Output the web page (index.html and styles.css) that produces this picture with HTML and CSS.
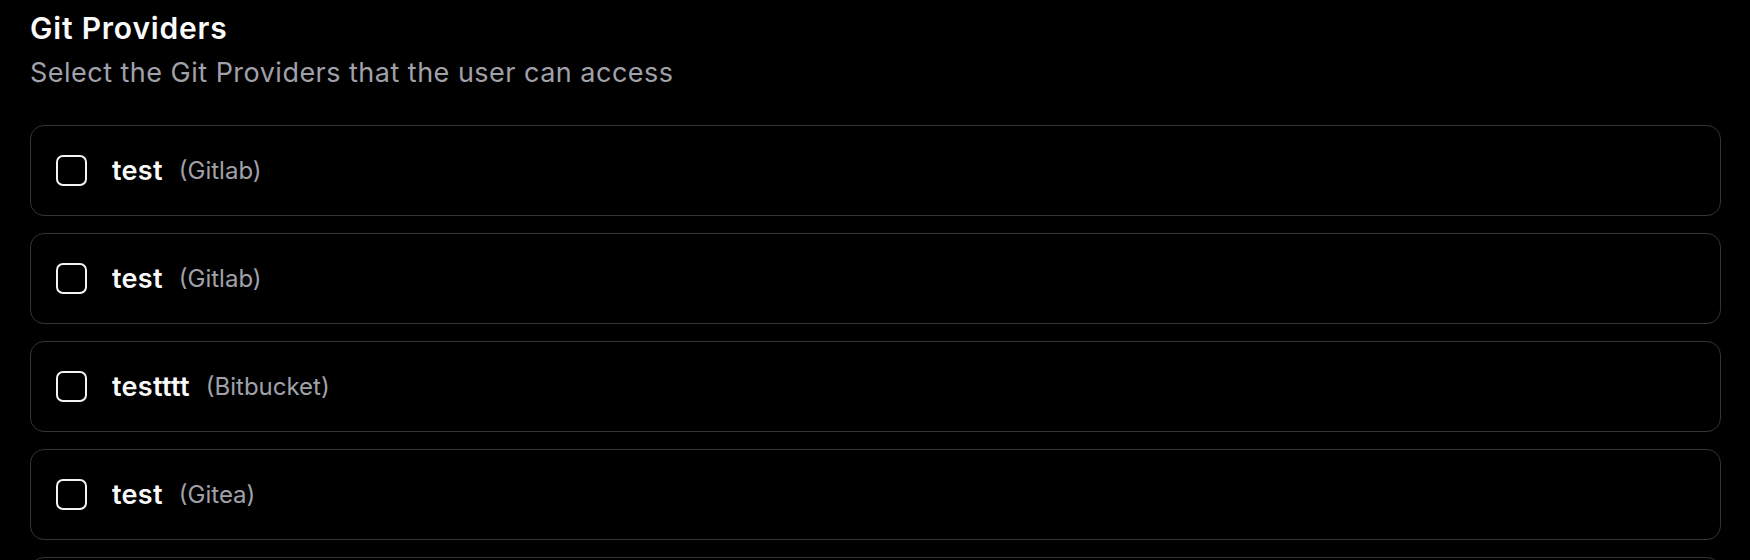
FILE: index.html
```html
<!DOCTYPE html>
<html lang="en">
<head>
<meta charset="utf-8">
<title>Git Providers</title>
<link rel="stylesheet" href="styles.css">
</head>
<body>
<main class="page">
  <h2 class="title">Git Providers</h2>
  <p class="subtitle">Select the Git Providers that the user can access</p>
  <div class="list">
    <label class="item"><span class="checkbox"></span><span class="name">test</span><span class="provider">(Gitlab)</span></label>
    <label class="item"><span class="checkbox"></span><span class="name">test</span><span class="provider">(Gitlab)</span></label>
    <label class="item"><span class="checkbox"></span><span class="name">testttt</span><span class="provider">(Bitbucket)</span></label>
    <label class="item"><span class="checkbox"></span><span class="name">test</span><span class="provider">(Gitea)</span></label>
    <label class="item"><span class="checkbox"></span><span class="name">test</span><span class="provider">(Github)</span></label>
  </div>
</main>
</body>
</html>
```
FILE: styles.css
```css
html, body {
  margin: 0;
  background: #000;
  height: 100%;
  overflow: hidden;
}
body {
  font-family: Inter, "Noto Sans", "Liberation Sans", sans-serif;
  color: #fafafa;
}
.page {
  padding: 0 29px 0 30px;
}
.title {
  margin: 0;
  padding-top: 10px;
  font-size: 30px;
  line-height: 36px;
  font-weight: 600;
  letter-spacing: 0.8px;
  color: #fafafa;
}
.subtitle {
  margin: 11px 0 0;
  font-size: 27px;
  line-height: 32px;
  letter-spacing: 0.48px;
  color: #a1a1aa;
}
.list {
  margin-top: 36px;
  display: flex;
  flex-direction: column;
  gap: 17px;
}
.item {
  box-sizing: border-box;
  height: 91px;
  display: flex;
  align-items: center;
  padding-left: 25px;
  border: 1px solid #343437;
  border-radius: 14px;
  flex-shrink: 0;
}
.checkbox {
  box-sizing: border-box;
  width: 31px;
  height: 31px;
  border: 2px solid #f4f4f5;
  border-radius: 7px;
  flex-shrink: 0;
}
.name {
  margin-left: 25px;
  font-size: 27px;
  line-height: 32px;
  font-weight: 600;
  letter-spacing: 0.3px;
  color: #fafafa;
}
.provider {
  margin-left: 16px;
  font-size: 24px;
  line-height: 32px;
  color: #a1a1aa;
}
```
